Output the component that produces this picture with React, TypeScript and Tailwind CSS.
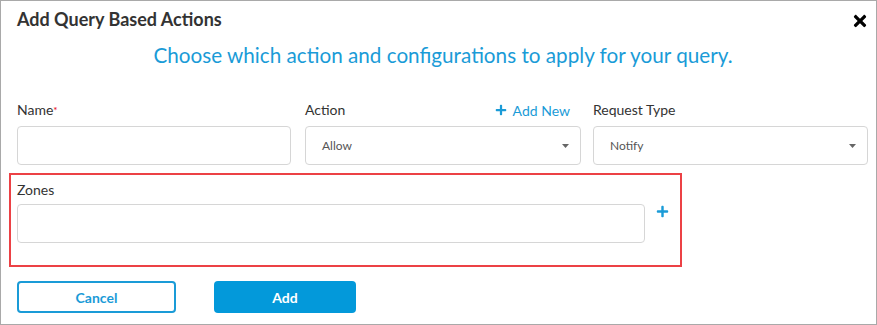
import { FaPlus, FaTimes } from "react-icons/fa";

const Caret = () => (
    <svg width="7" height="4" viewBox="0 0 7 4" className="fill-[#666]">
        <path d="M0 0 L7 0 L3.5 4 Z" />
    </svg>
);

const SelectBox = ({ value }: { value: string }) => (
    <div className="h-[39px] border border-[#d6d6d6] rounded-[4px] flex items-center justify-between pl-[16px] pr-[11px]">
        <span className="text-[12px] text-[#555]">{value}</span>
        <Caret />
    </div>
);

const App = () => {
    return (
        <div className="w-[877px] h-[325px] border border-[#a9a9a9] bg-white font-['Lato','Liberation_Sans',sans-serif] text-[#333]">
            <div className="flex justify-between items-start pl-[16px] pr-[7px] pt-[7px]">
                <h2 className="text-[18px] leading-[22px] font-bold text-[#333]">Add Query Based Actions</h2>
                <FaTimes className="text-[18px] text-black mt-[4px]" />
            </div>

            <p className="text-center text-[20.7px] leading-[24px] text-[#1a9bd7] mt-[13px] pl-[9px]">
                Choose which action and configurations to apply for your query.
            </p>

            <div className="flex pl-[16px] mt-[33px]">
                <div className="w-[274px]">
                    <label className="block text-[14px] leading-[20px] h-[20px]">
                        Name<span className="text-red-600 text-[10px] align-top">*</span>
                    </label>
                    <div className="mt-[6px] h-[39px] border border-[#d6d6d6] rounded-[4px]" />
                </div>
                <div className="w-[276px] ml-[14px]">
                    <div className="flex justify-between items-center h-[20px] pr-[11px]">
                        <label className="text-[14px] leading-[20px]">Action</label>
                        <button className="flex items-center gap-[6px] text-[14px] text-[#1a9bd7]">
                            <FaPlus className="text-[12px]" />
                            Add New
                        </button>
                    </div>
                    <div className="mt-[6px]">
                        <SelectBox value="Allow" />
                    </div>
                </div>
                <div className="w-[275px] ml-[12px]">
                    <label className="block text-[14px] leading-[20px] h-[20px]">Request Type</label>
                    <div className="mt-[6px]">
                        <SelectBox value="Notify" />
                    </div>
                </div>
            </div>

            <div className="ml-[8px] mt-[8px] w-[673px] h-[94px] border-2 border-[#ec4145] pl-[6px] pt-[6px]">
                <label className="block text-[14px] leading-[18px]">Zones</label>
                <div className="flex items-start mt-[5px]">
                    <div className="w-[628px] h-[39px] border border-[#d6d6d6] rounded-[4px]" />
                    <FaPlus className="text-[13px] text-[#1a9bd7] ml-[11px] mt-[1px]" />
                </div>
            </div>

            <div className="flex pl-[16px] mt-[14px] gap-[38px]">
                <button className="w-[159px] h-[32px] border-2 border-[#1a9bd7] rounded-[4px] text-[14px] font-bold text-[#1a9bd7]">
                    Cancel
                </button>
                <button className="w-[142px] h-[32px] bg-[#0399da] rounded-[4px] text-[14px] font-bold text-white">
                    Add
                </button>
            </div>
        </div>
    );
};

export default App;
